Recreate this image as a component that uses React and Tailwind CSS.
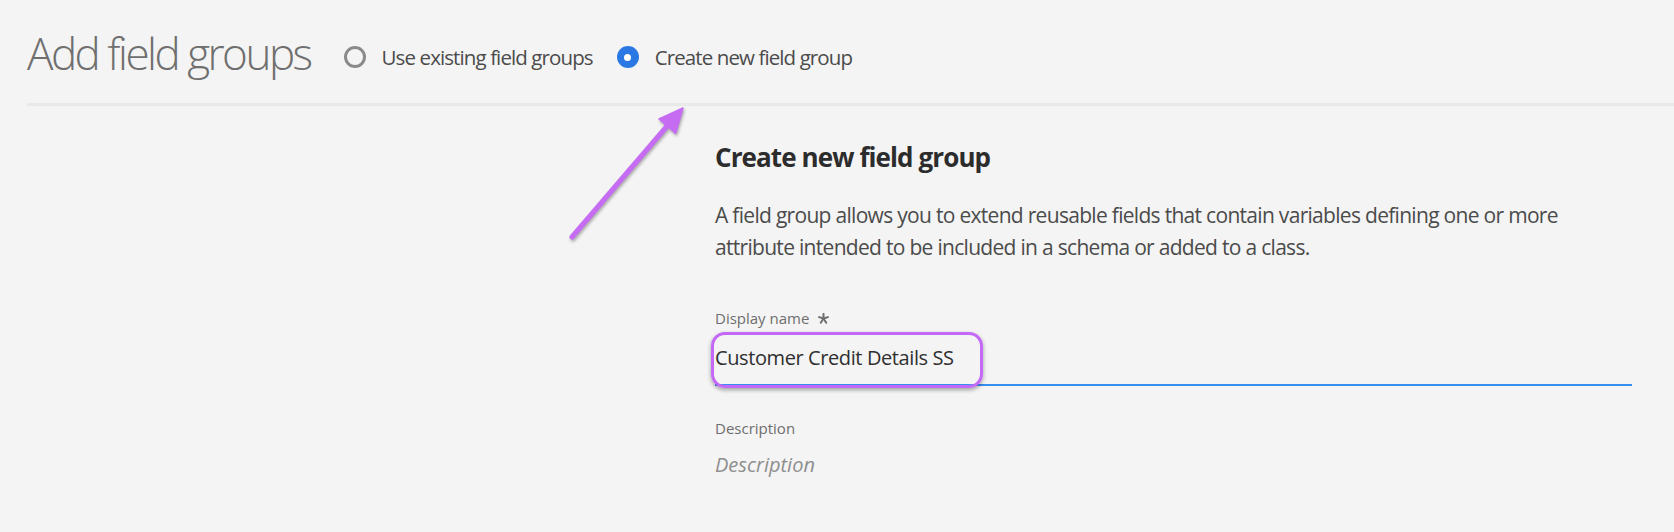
const FONT = { fontFamily: '"Open Sans", "Noto Sans", sans-serif' };

function Radio({ checked, label }) {
  return (
    <label className="inline-flex items-center gap-[16px] text-[20.5px] leading-[28px] tracking-[-0.9px] text-[#4b4b4b]">
      {checked ? (
        <span className="w-[22px] h-[22px] rounded-full bg-[#2b78e4] flex items-center justify-center">
          <span className="w-[7px] h-[7px] rounded-full bg-white" />
        </span>
      ) : (
        <span className="w-[22px] h-[22px] rounded-full border-[3px] border-[#8a8a8a] box-border" />
      )}
      <span>{label}</span>
    </label>
  );
}

function Asterisk() {
  return (
    <svg width="11" height="11" viewBox="0 0 10 10" className="ml-[9px] inline-block">
      <g stroke="#6e6e6e" strokeWidth="1.8" strokeLinecap="round">
        <line x1="5" y1="5" x2="5" y2="0.8" />
        <line x1="5" y1="5" x2="9" y2="3.7" />
        <line x1="5" y1="5" x2="7.5" y2="8.8" />
        <line x1="5" y1="5" x2="2.5" y2="8.8" />
        <line x1="5" y1="5" x2="1" y2="3.7" />
      </g>
    </svg>
  );
}

export default function App() {
  return (
    <div className="relative w-[1674px] h-[532px] overflow-hidden bg-[#f4f4f4]" style={FONT}>
      <header className="ml-[27px] pt-[27px] pb-[24px] border-b-[3px] border-[#e9e9e9] flex items-center">
        <h1 className="text-[44px] leading-[52px] font-light text-[#6f6f6f] tracking-[-2.5px]">Add field groups</h1>
        <div className="flex items-center ml-[33px] gap-[24px] mt-[8px]">
          <Radio label="Use existing field groups" />
          <Radio checked label="Create new field group" />
        </div>
      </header>

      <div className="flex">
        <div className="w-[715px] shrink-0" />
        <div className="flex-1 pr-[42px]">
          <h2 className="mt-[35px] text-[26px] leading-[32px] font-bold text-[#2c2c2c] tracking-[-0.9px]">Create new field group</h2>
          <p className="mt-[26px] text-[21px] leading-[32px] tracking-[-0.7px] text-[#4b4b4b] max-w-[860px]">
            A field group allows you to extend reusable fields that contain variables defining one or more attribute intended to be included in a schema or added to a class.
          </p>

          <div className="mt-[45px] text-[15px] leading-[20px] text-[#6e6e6e] flex items-center">
            Display name
            <Asterisk />
          </div>
          <div className="relative mt-[16px] h-[42px] border-b-2 border-[#378ef0] text-[20px] leading-[28px] tracking-[-0.4px] text-[#2f2f2f]">
            Customer Credit Details SS
            <div className="absolute left-[-4px] top-[-12px] w-[272px] h-[56px] rounded-[14px] border-[3.5px] border-[#c468f7] shadow-[0_2px_4px_rgba(0,0,0,0.35)]" />
          </div>

          <div className="mt-[32px] text-[15px] leading-[20px] text-[#6e6e6e]">Description</div>
          <div className="mt-[13px] text-[20px] leading-[28px] italic text-[#8e8e8e]">Description</div>
        </div>
      </div>

      <svg className="absolute left-0 top-0 pointer-events-none" width="1674" height="532" style={{ filter: 'drop-shadow(1px 2px 1.5px rgba(0,0,0,0.3))' }}>
        <line x1="572" y1="237" x2="668" y2="125" stroke="#c56cf2" strokeWidth="5" strokeLinecap="round" />
        <polygon points="683,108 675.7,133.4 659,119" fill="#c56cf2" stroke="#c56cf2" strokeWidth="1.5" strokeLinejoin="round" />
      </svg>
    </div>
  );
}
